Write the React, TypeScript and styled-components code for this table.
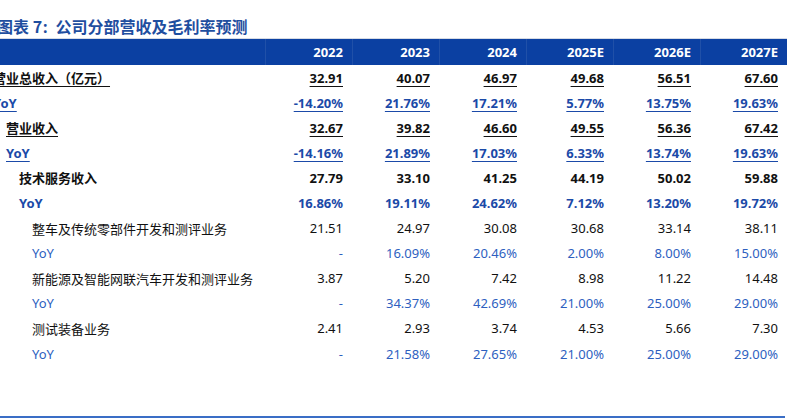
import React from "react";
import styled, { createGlobalStyle, css } from "styled-components";

const GlobalStyle = createGlobalStyle`
  html, body {
    margin: 0;
    padding: 0;
    background: #ffffff;
    overflow: hidden;
  }
  body {
    font-family: "Noto Sans", "Noto Sans CJK SC", sans-serif;
  }
`;

const Page = styled.div`
  width: 810px;
  height: 418px;
  position: relative;
  overflow: hidden;
`;

const Sheet = styled.div`
  margin-left: -8px;
  width: 795px;
  display: flex;
  flex-direction: column;
`;

const Title = styled.h1`
  margin: 14px 0 0 5px;
  height: 24px;
  font-size: 16px;
  line-height: 24px;
  font-weight: 700;
  color: #1f4e9f;
  font-family: "Noto Sans CJK SC", "Noto Sans", sans-serif;
  white-space: nowrap;
`;

const Colon = styled.span`
  font-family: "Noto Sans", sans-serif;
  margin: 0 8px 0 1px;
`;

const Grid = styled.div`
  display: grid;
  grid-template-columns: 273px repeat(6, 87px);
  border-top: 1px solid #d6dbe4;
`;

const HeadCell = styled.div<{ $first?: boolean }>`
  height: 26px;
  background: #0b40a2;
  color: #ffffff;
  font-size: 13px;
  font-weight: 700;
  display: flex;
  align-items: center;
  justify-content: flex-end;
  padding-right: 9px;
  ${(p) => !p.$first && css`border-left: 1px solid #2050a8;`}
`;

type Tone = "black" | "blue";

const toneColor = (tone: Tone, bold: boolean) =>
  tone === "blue" ? (bold ? "#1b4aa8" : "#2e5fbf") : "#111111";

const Cell = styled.div<{ $tone: Tone; $bold: boolean; $label?: boolean; $level?: number }>`
  height: 25.1px;
  display: flex;
  align-items: center;
  justify-content: ${(p) => (p.$label ? "flex-start" : "flex-end")};
  padding: ${(p) => (p.$label ? `0 0 0 ${1 + (p.$level || 0) * 13}px` : "0 9px 0 0")};
  font-size: 13px;
  font-weight: ${(p) => (p.$bold ? 700 : 400)};
  color: ${(p) => toneColor(p.$tone, p.$bold)};
  font-family: "Noto Sans", "Noto Sans CJK SC", sans-serif;
  white-space: nowrap;
`;

const Text = styled.span<{ $underline: boolean }>`
  ${(p) =>
    p.$underline &&
    css`
      text-decoration: underline;
      text-decoration-thickness: 1px;
      text-underline-offset: 3px;
    `}
`;

const BottomRule = styled.div`
  position: absolute;
  left: 0;
  top: 416px;
  width: 785px;
  height: 2px;
  background: #3a6ec6;
`;

type Row = {
  label: string;
  level: number;
  tone: Tone;
  bold: boolean;
  underline: boolean;
  values: string[];
};

const years = ["2022", "2023", "2024", "2025E", "2026E", "2027E"];

const rows: Row[] = [
  { label: "营业总收入（亿元）", level: 0, tone: "black", bold: true, underline: true, values: ["32.91", "40.07", "46.97", "49.68", "56.51", "67.60"] },
  { label: "YoY", level: 0, tone: "blue", bold: true, underline: true, values: ["-14.20%", "21.76%", "17.21%", "5.77%", "13.75%", "19.63%"] },
  { label: "营业收入", level: 1, tone: "black", bold: true, underline: true, values: ["32.67", "39.82", "46.60", "49.55", "56.36", "67.42"] },
  { label: "YoY", level: 1, tone: "blue", bold: true, underline: true, values: ["-14.16%", "21.89%", "17.03%", "6.33%", "13.74%", "19.63%"] },
  { label: "技术服务收入", level: 2, tone: "black", bold: true, underline: false, values: ["27.79", "33.10", "41.25", "44.19", "50.02", "59.88"] },
  { label: "YoY", level: 2, tone: "blue", bold: true, underline: false, values: ["16.86%", "19.11%", "24.62%", "7.12%", "13.20%", "19.72%"] },
  { label: "整车及传统零部件开发和测评业务", level: 3, tone: "black", bold: false, underline: false, values: ["21.51", "24.97", "30.08", "30.68", "33.14", "38.11"] },
  { label: "YoY", level: 3, tone: "blue", bold: false, underline: false, values: ["-", "16.09%", "20.46%", "2.00%", "8.00%", "15.00%"] },
  { label: "新能源及智能网联汽车开发和测评业务", level: 3, tone: "black", bold: false, underline: false, values: ["3.87", "5.20", "7.42", "8.98", "11.22", "14.48"] },
  { label: "YoY", level: 3, tone: "blue", bold: false, underline: false, values: ["-", "34.37%", "42.69%", "21.00%", "25.00%", "29.00%"] },
  { label: "测试装备业务", level: 3, tone: "black", bold: false, underline: false, values: ["2.41", "2.93", "3.74", "4.53", "5.66", "7.30"] },
  { label: "YoY", level: 3, tone: "blue", bold: false, underline: false, values: ["-", "21.58%", "27.65%", "21.00%", "25.00%", "29.00%"] },
];

export default function App() {
  return (
    <Page>
      <GlobalStyle />
      <Sheet>
        <Title>
          图表 7<Colon>:</Colon>公司分部营收及毛利率预测
        </Title>
        <Grid>
          <HeadCell $first />
          {years.map((y) => (
            <HeadCell key={y}>{y}</HeadCell>
          ))}
          {rows.map((r, i) => (
            <React.Fragment key={i}>
              <Cell $label $level={r.level} $tone={r.tone} $bold={r.bold}>
                <Text $underline={r.underline}>{r.label}</Text>
              </Cell>
              {r.values.map((v, j) => (
                <Cell key={j} $tone={r.tone} $bold={r.bold}>
                  <Text $underline={r.underline}>{v}</Text>
                </Cell>
              ))}
            </React.Fragment>
          ))}
        </Grid>
      </Sheet>
      <BottomRule />
    </Page>
  );
}
